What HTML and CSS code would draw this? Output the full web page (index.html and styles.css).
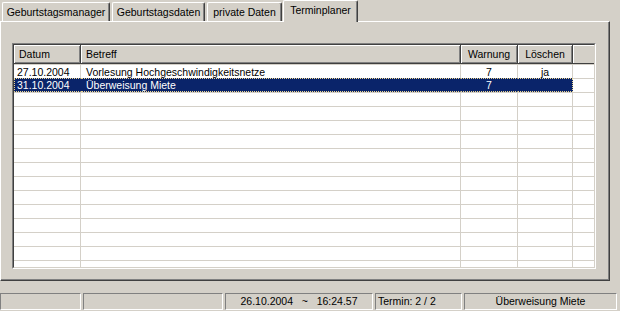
FILE: index.html
```html
<!DOCTYPE html>
<html>
    <head>
        <meta charset="utf-8">
        <title>Terminplaner</title>
        <link rel="stylesheet" href="styles.css">
    </head>
    <body>
        <div class="tabs">
            <div class="tab-header">
                <span class="tab-item tab-1">Geburtstagsmanager</span>
                <span class="tab-item tab-2">Geburtstagsdaten</span>
                <span class="tab-item tab-3">private Daten</span>
                <span class="tab-item tab-4 active">Terminplaner</span>
            </div>
            <div class="tab-panel">
                <div class="list">
                    <div class="list-inner">
                        <div class="list-head">
                            <span class="head-cell">Datum</span>
                            <span class="head-cell">Betreff</span>
                            <span class="head-cell center">Warnung</span>
                            <span class="head-cell center">Löschen</span>
                            <span class="head-cell fill"></span>
                        </div>
                        <div class="list-body">
                            <div class="row">
                                <span class="cell">27.10.2004</span>
                                <span class="cell">Vorlesung Hochgeschwindigkeitsnetze</span>
                                <span class="cell center">7</span>
                                <span class="cell center">ja</span>
                                <span class="cell fill"></span>
                            </div>
                            <div class="row selected">
                                <span class="cell first">31.10.2004</span>
                                <span class="cell">Überweisung Miete</span>
                                <span class="cell center">7</span>
                                <span class="cell center last"></span>
                                <span class="cell fill"></span>
                            </div>
                            <div class="row"><span class="cell"></span><span class="cell"></span><span class="cell"></span><span class="cell"></span><span class="cell fill"></span></div>
                            <div class="row"><span class="cell"></span><span class="cell"></span><span class="cell"></span><span class="cell"></span><span class="cell fill"></span></div>
                            <div class="row"><span class="cell"></span><span class="cell"></span><span class="cell"></span><span class="cell"></span><span class="cell fill"></span></div>
                            <div class="row"><span class="cell"></span><span class="cell"></span><span class="cell"></span><span class="cell"></span><span class="cell fill"></span></div>
                            <div class="row"><span class="cell"></span><span class="cell"></span><span class="cell"></span><span class="cell"></span><span class="cell fill"></span></div>
                            <div class="row"><span class="cell"></span><span class="cell"></span><span class="cell"></span><span class="cell"></span><span class="cell fill"></span></div>
                            <div class="row"><span class="cell"></span><span class="cell"></span><span class="cell"></span><span class="cell"></span><span class="cell fill"></span></div>
                            <div class="row"><span class="cell"></span><span class="cell"></span><span class="cell"></span><span class="cell"></span><span class="cell fill"></span></div>
                            <div class="row"><span class="cell"></span><span class="cell"></span><span class="cell"></span><span class="cell"></span><span class="cell fill"></span></div>
                            <div class="row"><span class="cell"></span><span class="cell"></span><span class="cell"></span><span class="cell"></span><span class="cell fill"></span></div>
                            <div class="row"><span class="cell"></span><span class="cell"></span><span class="cell"></span><span class="cell"></span><span class="cell fill"></span></div>
                            <div class="row"><span class="cell"></span><span class="cell"></span><span class="cell"></span><span class="cell"></span><span class="cell fill"></span></div>
                            <div class="row"><span class="cell"></span><span class="cell"></span><span class="cell"></span><span class="cell"></span><span class="cell fill"></span></div>
                        </div>
                    </div>
                </div>
            </div>
        </div>
        <div class="statusbar">
            <span class="panel p-1"></span>
            <span class="panel p-2"></span>
            <span class="panel p-3 center">26.10.2004   ~   16:24.57</span>
            <span class="panel p-4">Termin: 2 / 2</span>
            <span class="panel p-5 center">Überweisung Miete</span>
        </div>
    </body>
</html>
```

FILE: styles.css
```css
*{
    box-sizing: border-box;
}
body{
    margin: 0;
    width: 620px;
    height: 311px;
    overflow: hidden;
    background: #d4d0c8;
    color: #000;
    font: 10.5px "Liberation Sans", Arial, sans-serif;
}
.center{
    text-align: center;
}

/* tabs */
.tabs{
    width: 610px;
}
.tabs .tab-header{
    display: flex;
    align-items: flex-end;
    gap: 2px;
    height: 21px;
    padding-left: 2px;
    position: relative;
    z-index: 1;
}
.tabs .tab-item{
    height: 19px;
    padding-top: 2px;
    line-height: 14px;
    text-align: center;
    border: 1px solid #fff;
    border-bottom: 0;
    border-right-color: #404040;
    border-radius: 2px 2px 0 0;
    box-shadow: inset -1px 0 #808080;
    background: #d4d0c8;
    white-space: nowrap;
}
.tabs .tab-1{ width: 108px; }
.tabs .tab-2{ width: 93px; }
.tabs .tab-3{ width: 75px; }
.tabs .tab-4{ width: 75px; }
.tabs .tab-item.active{
    height: 22px;
    margin-left: -1px;
    margin-bottom: -1px;
}
.tabs .tab-panel{
    height: 260px;
    border: 1px solid;
    border-color: #fff #404040 #404040 #fff;
    box-shadow: inset -1px -1px #808080;
    padding: 21px 0 0 11px;
}

/* list view */
.list{
    width: 584px;
    height: 226px;
    border: 1px solid;
    border-color: #808080 #fff #fff #808080;
}
.list-inner{
    height: 224px;
    border: 1px solid;
    border-color: #404040 #d4d0c8 #d4d0c8 #404040;
    background: #fff;
    overflow: hidden;
}
.list-head,
.row{
    display: grid;
    grid-template-columns: 67px 380px 57px 55px 1fr;
}
.head-cell{
    height: 19px;
    padding: 1px 5px 0;
    line-height: 16px;
    background: #d4d0c8;
    border-right: 1px solid #404040;
    border-bottom: 1px solid #404040;
    box-shadow: inset 1px 1px #fff, inset -1px -1px #808080;
    white-space: nowrap;
}
.head-cell.fill{
    border-right: 0;
    box-shadow: inset 1px 1px #fff;
}
.cell{
    height: 14px;
    padding: 1px 3px 0;
    line-height: 12px;
    border-top: 1px solid #d4d0c8;
    border-right: 1px solid #d4d0c8;
    white-space: nowrap;
    overflow: hidden;
}
.cell:nth-child(2){
    padding-left: 5px;
}
.cell.fill{
    border-right: 0;
}
.row.selected .cell:not(.fill){
    background: #0a246a;
    color: #fff;
    border-top: 1px dotted #f0d890;
    border-bottom: 1px dotted #f0d890;
    border-right-color: #0a246a;
    line-height: 11px;
}
.row.selected .cell.first{
    border-left: 1px dotted #f0d890;
    padding-left: 2px;
}
.row.selected .cell.last{
    border-right: 1px dotted #f0d890;
}

/* status bar */
.statusbar{
    display: flex;
    gap: 2px;
    height: 30px;
    padding-top: 12px;
}
.statusbar .panel{
    height: 17px;
    line-height: 15px;
    border: 1px solid;
    border-color: #808080 #fff #fff #808080;
    white-space: pre;
}
.statusbar .p-1{ width: 81px; }
.statusbar .p-2{ width: 140px; }
.statusbar .p-3{ width: 148px; }
.statusbar .p-4{ width: 87px; padding-left: 2px; }
.statusbar .p-5{ width: 153px; }
```
